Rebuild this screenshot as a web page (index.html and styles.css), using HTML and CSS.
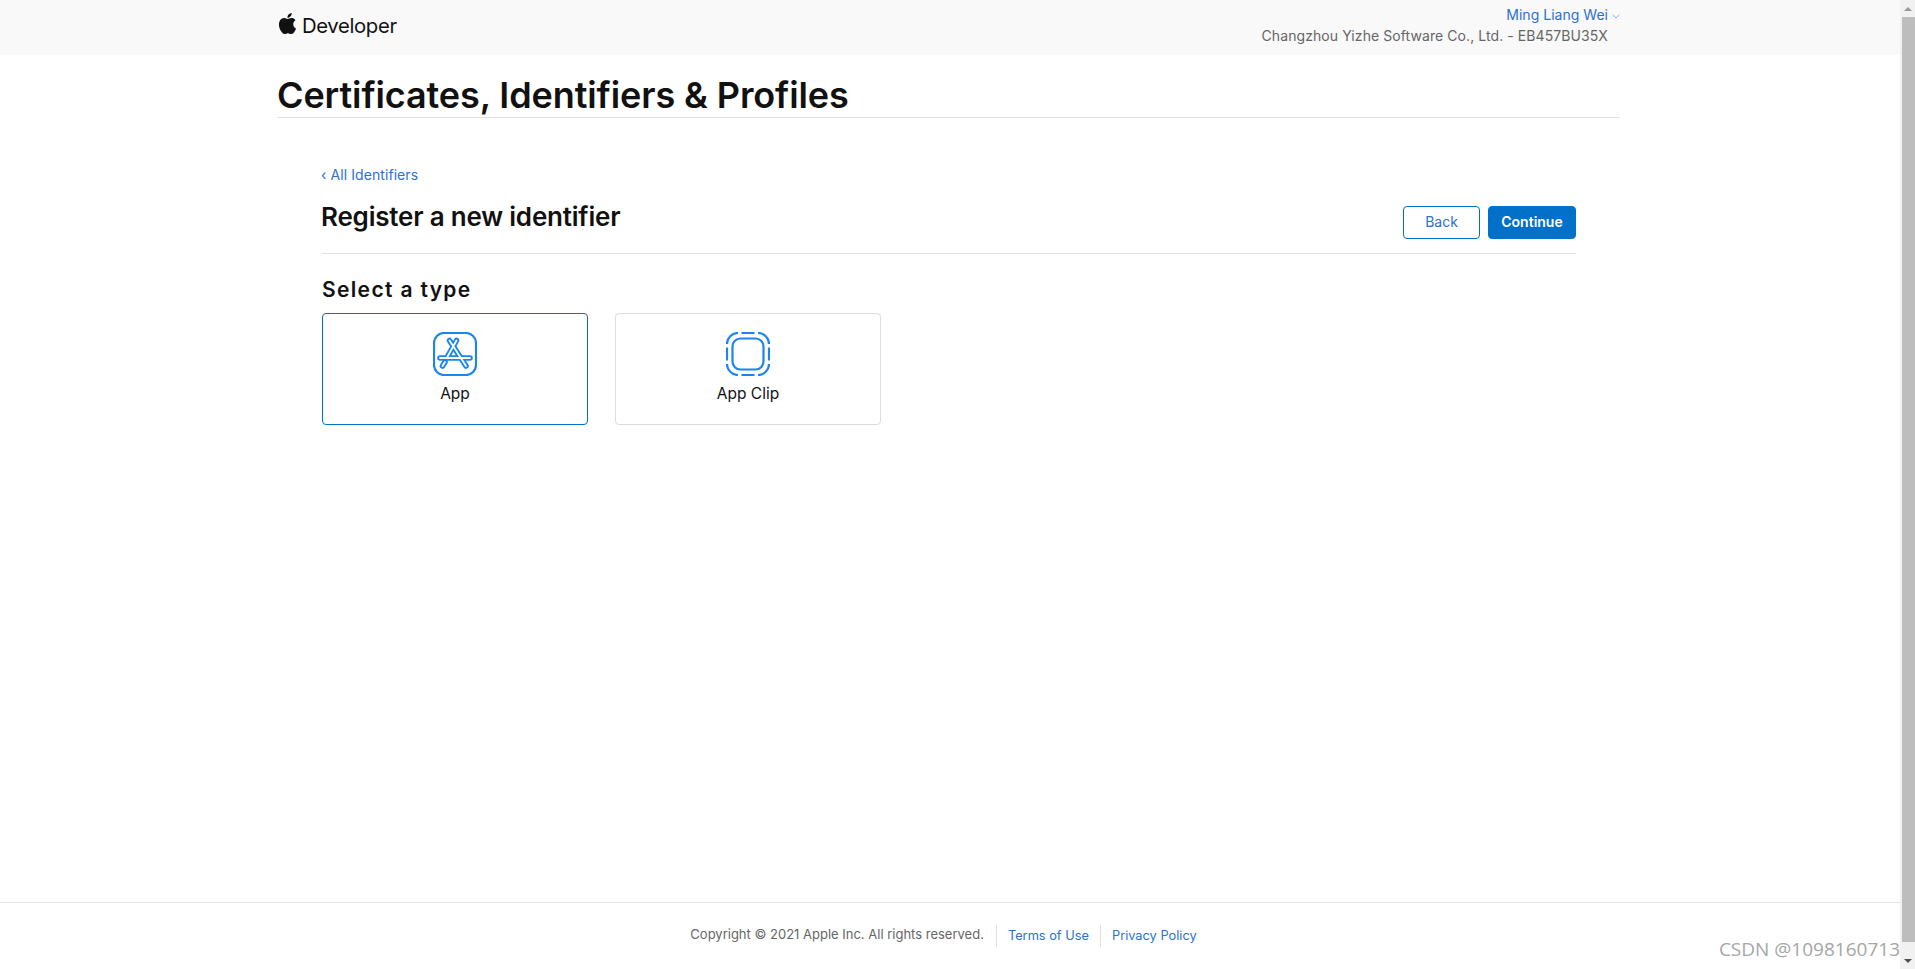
FILE: index.html
```html
<!DOCTYPE html>
<html lang="en">
<head>
<meta charset="utf-8">
<title>Certificates, Identifiers &amp; Profiles</title>
<link rel="stylesheet" href="styles.css">
</head>
<body>
<div class="page">
  <header class="topbar">
    <div class="topbar-inner">
      <a class="brand">
        <svg class="apple" viewBox="0 0 24 24"><path d="M12.152 6.896c-.948 0-2.415-1.078-3.96-1.04-2.04.027-3.91 1.183-4.961 3.014-2.117 3.675-.546 9.103 1.519 12.09 1.013 1.454 2.208 3.09 3.792 3.039 1.52-.065 2.09-.987 3.935-.987 1.831 0 2.35.987 3.96.948 1.637-.026 2.676-1.48 3.676-2.948 1.156-1.688 1.636-3.325 1.662-3.415-.039-.013-3.182-1.221-3.22-4.857-.026-3.04 2.48-4.494 2.597-4.559-1.429-2.09-3.623-2.324-4.39-2.376-2-.156-3.675 1.09-4.61 1.09zM15.53 3.83c.843-1.012 1.4-2.427 1.245-3.83-1.207.052-2.662.805-3.532 1.818-.78.896-1.454 2.338-1.273 3.714 1.338.104 2.715-.688 3.559-1.701"/></svg>
        <span>Developer</span>
      </a>
      <div class="account">
        <div class="account-name"><a>Ming Liang Wei</a><svg class="caret" viewBox="0 0 8 5"><path d="M.7.8 4 4l3.3-3.2"/></svg></div>
        <div class="account-team">Changzhou Yizhe Software Co., Ltd. - EB457BU35X</div>
      </div>
    </div>
  </header>

  <main class="main">
    <h1 class="page-title">Certificates, Identifiers &amp; Profiles</h1>
    <section class="panel">
      <a class="backlink">‹ All Identifiers</a>
      <div class="panel-head">
        <h2 class="panel-title">Register a new identifier</h2>
        <div class="actions">
          <button class="btn btn-outline">Back</button>
          <button class="btn btn-primary">Continue</button>
        </div>
      </div>
      <h3 class="section-title">Select a type</h3>
      <div class="cards">
        <div class="card card-selected">
          <svg class="card-icon" viewBox="0 0 44 44">
            <rect class="ic" x="1" y="1" width="42" height="42" rx="10"/>
            <g class="a-out">
              <path d="M16.5 8.5 33 34"/><path d="M23.5 8.5 14 25.5"/><path d="M7 26H37"/><path d="M9.5 34l2.5-4"/>
            </g>
            <g class="a-in">
              <path d="M16.5 8.5 33 34"/><path d="M23.5 8.5 14 25.5"/><path d="M7 26H37"/><path d="M9.5 34l2.5-4"/>
            </g>
          </svg>
          <span class="card-label">App</span>
        </div>
        <div class="card">
          <svg class="card-icon" viewBox="0 0 44 44">
            <rect class="ic clip-dash" x="1" y="1" width="42" height="42" rx="11" pathLength="148"/>
            <rect class="ic" x="6.5" y="6.5" width="31" height="31" rx="8"/>
          </svg>
          <span class="card-label">App Clip</span>
        </div>
      </div>
    </section>
  </main>

  <footer class="footer">
    <span class="copyright">Copyright © 2021 Apple Inc. All rights reserved.</span>
    <a class="footer-link">Terms of Use</a>
    <a class="footer-link">Privacy Policy</a>
  </footer>
  <div class="watermark">CSDN @1098160713</div>
</div>
<div class="scrollbar">
  <div class="sb-btn"><span class="arrow-up"></span></div>
  <div class="sb-thumb"></div>
  <div class="sb-btn"><span class="arrow-down"></span></div>
</div>
</body>
</html>
```

FILE: styles.css
```css
* { box-sizing: border-box; }
html, body { height: 100%; }
body {
  margin: 0;
  display: flex;
  height: 969px;
  overflow: hidden;
  background: #fff;
  color: #111;
  font-family: Inter, "Liberation Sans", sans-serif;
}
a { color: #2a72cf; text-decoration: none; }

.page { position: relative; flex: 1; display: flex; flex-direction: column; min-width: 0; }

.topbar { height: 55px; background: #f9f9f9; flex: none; }
.topbar-inner { width: 1343px; margin-left: 277px; height: 100%; display: flex; justify-content: space-between; }
.brand { display: flex; align-items: center; color: #111; font-size: 20.3px; font-weight: 400; letter-spacing: -.35px; height: 51px; }
.apple { width: 21px; height: 21px; fill: #111; margin-right: 4px; margin-top: -4px; }
.account { display: flex; flex-direction: column; align-items: flex-end; font-size: 14px; padding-top: 5px; }
.account-name { display: flex; align-items: center; height: 19px; letter-spacing: .02px; }
.caret { width: 8px; height: 5px; margin-left: 4px; margin-top: 3px; fill: none; stroke: #8db4e4; stroke-width: 1; }
.account-team { color: #666; margin-right: 12px; margin-top: 3px; letter-spacing: .08px; }

.main { flex: 1; width: 1343px; margin-left: 277px; display: flex; flex-direction: column; }
.page-title { margin: 0; height: 63px; padding-top: 18px; font-size: 36px; line-height: 44px; font-weight: 600; letter-spacing: -.1px; border-bottom: 1px solid #e3e3e3; }
.panel { width: 1254px; margin-left: 45px; padding-top: 47px; display: flex; flex-direction: column; }
.backlink { font-size: 14px; line-height: 20px; letter-spacing: .08px; margin-left: -1px; }
.panel-head { display: flex; justify-content: space-between; height: 69px; padding-top: 16px; border-bottom: 1px solid #e0e0e0; }
.panel-title { margin: 0; font-size: 26px; line-height: 32px; font-weight: 600; letter-spacing: -.2px; margin-left: -1px; }
.actions { display: flex; gap: 8px; height: 33px; margin-top: 5px; }
.btn { height: 33px; border-radius: 4px; font-family: inherit; font-size: 14px; padding: 0; margin: 0; padding-bottom: 3px; }
.btn-outline { width: 77px; background: #fff; border: 1px solid #0070c9; color: #2a72cf; }
.btn-primary { width: 88px; background: #0070c9; border: 1px solid #0070c9; color: #fff; font-weight: 600; }

.section-title { margin: 23px 0 0; font-size: 21px; line-height: 26px; font-weight: 600; letter-spacing: 1.35px; }
.cards { display: flex; gap: 27px; margin-top: 10px; }
.card { width: 266px; height: 112px; border: 1px solid #dcdcdc; border-radius: 4px; display: flex; flex-direction: column; align-items: center; padding-top: 18px; }
.card-selected { border-color: #0070c9; }
.card-icon { width: 44px; height: 44px; margin-left: -1px; }
.ic { fill: none; stroke: #1a85f0; stroke-width: 2.2; }
.clip-dash { stroke-dasharray: 13 3.5 17 3.5; stroke-dashoffset: -3.5; }
.a-out path { fill: none; stroke: #1a85f0; stroke-width: 5.6; stroke-linecap: round; }
.a-in path { fill: none; stroke: #fff; stroke-width: 1.8; stroke-linecap: round; }
.card-label { font-size: 15.5px; line-height: 20px; margin-top: 8px; color: #111; }

.footer { flex: none; height: 67px; border-top: 1px solid #e5e5e5; display: flex; justify-content: center; align-items: flex-start; padding-top: 22px; padding-right: 2px; font-size: 12.8px; }
.copyright { color: #666; font-size: 13px; line-height: 18px; padding-right: 12px; height: 22px; }
.footer-link { line-height: 22px; height: 22px; padding: 0 11px; border-left: 1px solid #e0e0e0; }

.watermark { position: absolute; right: 0; bottom: 8px; font-family: "Open Sans", sans-serif; font-size: 19px; line-height: 24px; color: #a6a6a6; }

.scrollbar { flex: none; width: 15px; background: #f1f1f1; display: flex; flex-direction: column; }
.sb-btn { height: 17px; display: flex; align-items: center; justify-content: center; flex: none; }
.sb-thumb { flex: 1; background: #bdbdbd; margin: 0 0 10px 2px; }
.arrow-up { border: 4px solid transparent; border-top: 0; border-bottom: 4px solid #999; }
.arrow-down { border: 4px solid transparent; border-bottom: 0; border-top: 4px solid #505050; }
```
